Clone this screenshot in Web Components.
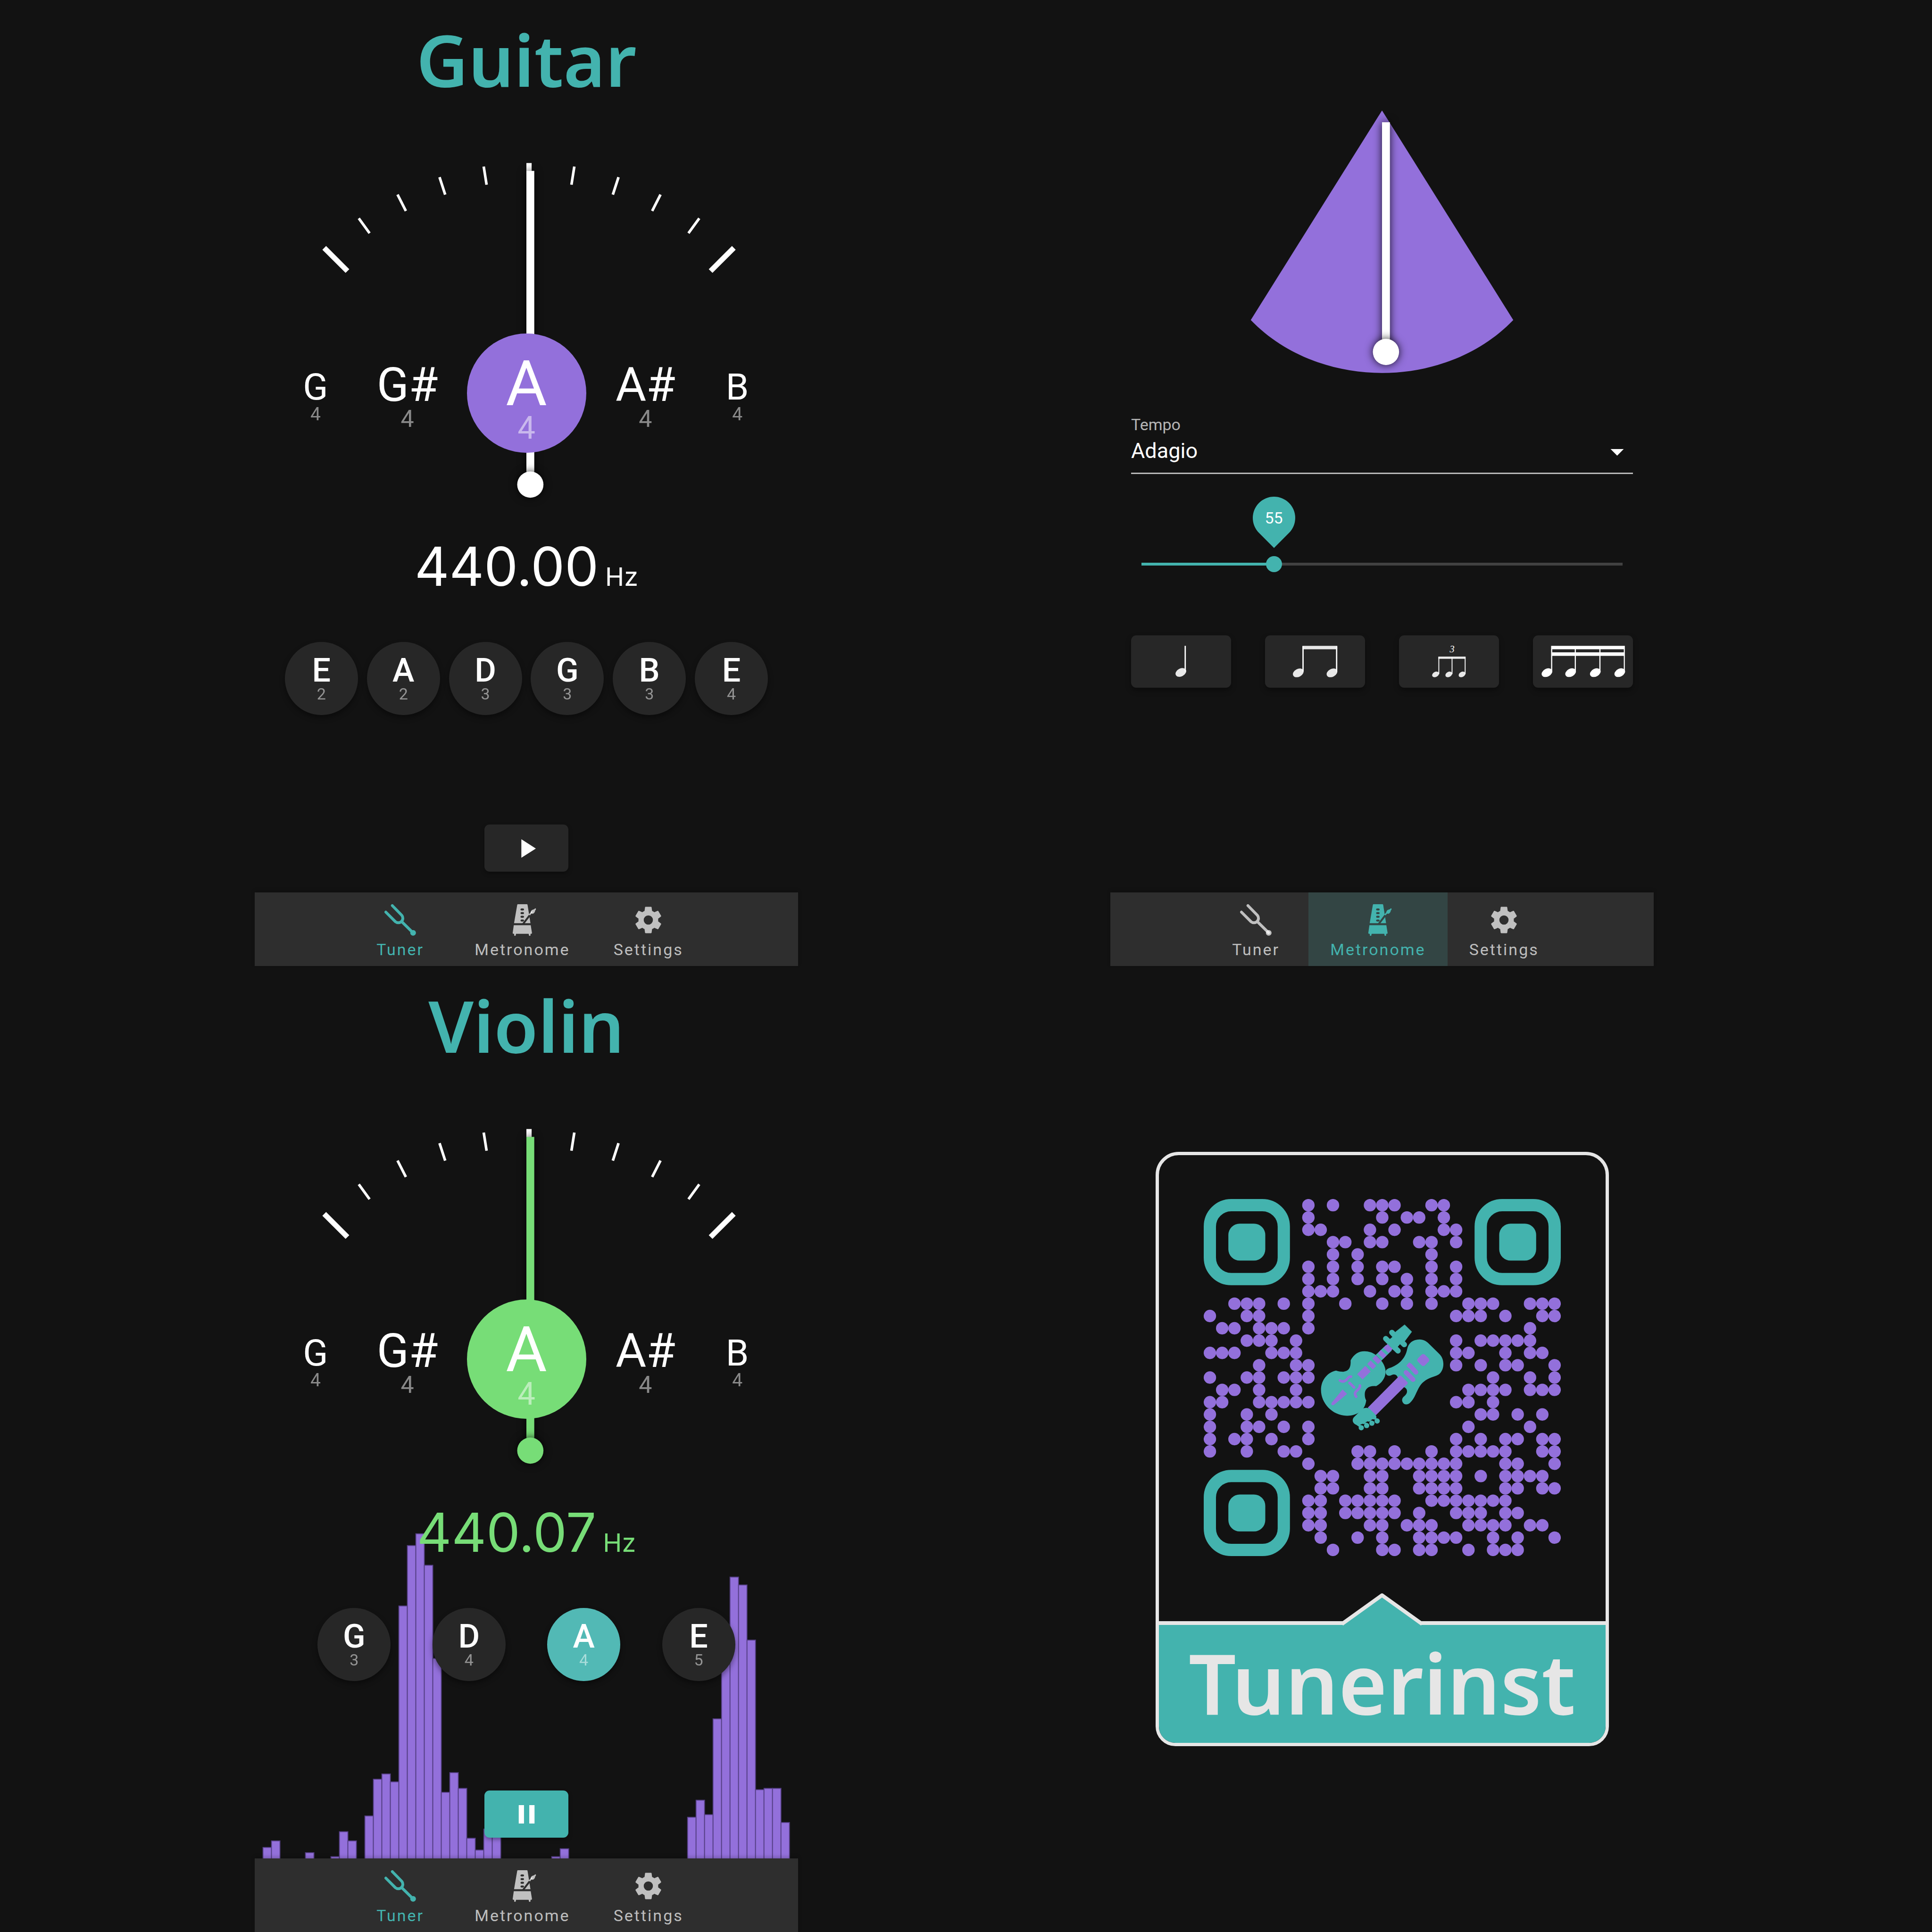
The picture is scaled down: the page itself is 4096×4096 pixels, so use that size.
<!DOCTYPE html>
<html lang="en">
<head>
<meta charset="utf-8">
<meta name="viewport" content="width=device-width, initial-scale=1">
<title>Tunerinst</title>
<style>
  html, body { margin: 0; background: #121212; }
</style>
</head>
<body>
<tuner-showcase>
  <tuner-screen instrument="Guitar" hz="440.00" strings="E2 A2 D3 G3 B3 E4"></tuner-screen>
  <metronome-screen></metronome-screen>
  <tuner-screen instrument="Violin" hz="440.07" strings="G3 D4 A4 E5" playing="A4"></tuner-screen>
  <share-screen></share-screen>
</tuner-showcase>

<script>
const define = (name, render) => customElements.define(name, class extends HTMLElement {
  connectedCallback() {
    if (this.shadowRoot) return;
    const t = document.createElement('template');
    t.innerHTML = render(this);
    this.attachShadow({ mode: 'open' }).append(t.content.cloneNode(true));
  }
});

/* Page: two columns of screens, one screen per row half */
define('tuner-showcase', () => `
<style>
  :host {
    --bg: #121212; --surface: #272727; --bar: #2e2e2e;
    --teal: #43b3ae; --purple: #9370db; --green: #77dd77;
    --muted: rgba(255,255,255,.7);
    display: grid;
    grid-template-columns: 540fr 1152fr 662fr 1152fr 590fr;
    grid-auto-rows: minmax(50vh, auto);
    background: var(--bg); color: #fff;
    font-family: Roboto, "Liberation Sans", sans-serif;
  }
  ::slotted(:nth-child(odd)) { grid-column: 2; }
  ::slotted(:nth-child(even)) { grid-column: 4; }
</style><slot></slot>`);

define('tuner-screen', el => {
  const playing = el.getAttribute('playing');
  return `
<style>
  :host { display: flex; flex-direction: column; position: relative; isolation: isolate; min-width: 0; }
  h1 { margin: 46px 0 0; font: 600 152px/160px "Noto Sans", sans-serif; color: var(--teal); text-align: center; }
  note-gauge { margin-top: 109px; }
  pitch-readout { margin-top: 75px; }
  string-picker { margin-top: 78px; }
  transport-button { margin: auto auto 44px; }
  spectrum-bars { position: absolute; left: 0; right: 0; bottom: 156px; z-index: -1; }
</style>
${playing ? '<spectrum-bars></spectrum-bars>' : ''}
<h1>${el.getAttribute('instrument')}</h1>
<note-gauge ${playing ? 'intune' : ''}></note-gauge>
<pitch-readout ${playing ? 'intune' : ''}>${el.getAttribute('hz')}</pitch-readout>
<string-picker strings="${el.getAttribute('strings')}" active="${playing || ''}"></string-picker>
<transport-button ${playing ? 'playing' : ''}></transport-button>
<bottom-nav current="Tuner"></bottom-nav>`;
});

define('note-gauge', el => {
  const tick = (deg, len, w) =>
    `<line x1="627" x2="627" y1="33" y2="${33 + len}" stroke="#fff" stroke-width="${w}" transform="rotate(${deg} 627 695)"/>`;
  const ticks = [-36, -27, -18, -9, 9, 18, 27, 36].map(d => tick(d, 42, 6)).join('')
    + [-45, 0, 45].map(d => tick(d, 75, 12)).join('');
  const notes = [['G', 'far'], ['G#', 'near'], ['A', 'current'], ['A#', 'near'], ['B', 'far']];
  return `
<style>
  :host { display: grid; --tone: var(--purple); --needle: #fff; }
  :host([intune]) { --tone: var(--green); --needle: var(--green); }
  svg, .notes { grid-area: 1 / 1; }
  svg { display: block; width: 100%; overflow: visible; }
  .needle { fill: var(--needle); filter: drop-shadow(0 0 9px rgba(0,0,0,.8)); }
  .notes {
    display: grid; align-self: start; margin-top: 392px;
    grid-template-columns: 60fr 138fr 252fr 253px 252fr 138fr 60fr;
  }
  .note { display: flex; flex-direction: column; align-items: center; justify-content: center;
          box-sizing: border-box; height: 253px; padding-top: 19px; }
  .note:first-child { grid-column: 2; }
  b { font-weight: 400; line-height: .9; }
  small { font-size: .5em; line-height: 1.1; opacity: .5; }
  .far { font-size: 78px; }
  .near { font-size: 100px; }
  .current { font-size: 134px; padding-top: 28px; border-radius: 50%; background: var(--tone); }
  .current small { line-height: 1; }
</style>
<svg viewBox="0 0 1242 810" aria-hidden="true">
  ${ticks}
  <rect class="needle" x="621" y="51" width="18" height="717"/>
  <circle class="needle" cx="630" cy="768" r="30"/>
</svg>
<div class="notes">${notes.map(([n, c]) => `<div class="note ${c}"><b>${n}</b><small>4</small></div>`).join('')}</div>`;
});

define('pitch-readout', () => `
<style>
  :host { display: flex; justify-content: center; align-items: baseline; gap: 14px;
          font: 400 114px/120px Inter, sans-serif; }
  :host([intune]) { color: var(--green); }
  small { font-size: 54px; }
</style><span><slot></slot></span><small>Hz</small>`);

define('string-picker', el => `
<style>
  :host { display: flex; justify-content: space-evenly; padding: 0 45px; }
  button {
    display: flex; flex-direction: column; align-items: center; justify-content: center;
    box-sizing: border-box; width: 155px; height: 155px; padding: 0; border: 0; border-radius: 50%;
    background: var(--surface); color: #fff; font: 500 70px/64px Roboto, sans-serif;
    box-shadow: 0 6px 12px rgba(0,0,0,.4);
  }
  button[aria-pressed=true] { background: #52b9b5; }
  small { font-size: 34px; font-weight: 400; line-height: 36px; opacity: .5; }
</style>
${el.getAttribute('strings').split(' ').map(s =>
  `<button type="button" aria-pressed="${s === el.getAttribute('active')}">${s[0]}<small>${s[1]}</small></button>`).join('')}`);

define('transport-button', el => {
  const on = el.hasAttribute('playing');
  return `
<style>
  :host { display: block; }
  button { display: grid; place-items: center; width: 178px; height: 100px; padding: 0; border: 0;
           border-radius: 11px; background: var(--surface); box-shadow: 0 4px 8px rgba(0,0,0,.35); }
  :host([playing]) button { background: var(--teal); }
  svg { width: 67px; fill: #fff; }
</style>
<button type="button" aria-label="${on ? 'Pause' : 'Play'}"><svg viewBox="0 0 24 24">
<path d="${on ? 'M14 19h4V5h-4M6 19h4V5H6v14z' : 'M8 5.14v14l11-7-11-7z'}"/></svg></button>`;
});

/* Bar heights by slot, 64 slots across the screen */
const SPECTRUM = { 1: 25, 2: 40, 6: 13, 9: 4, 10: 61, 11: 40, 13: 97, 14: 181, 15: 193, 16: 175, 17: 577,
  18: 715, 19: 742, 20: 670, 21: 457, 22: 151, 23: 196, 24: 160, 25: 46, 26: 19, 27: 67, 28: 58, 35: 4, 36: 22,
  51: 94, 52: 133, 53: 100, 54: 319, 55: 472, 56: 643, 57: 625, 58: 499, 59: 157, 60: 160, 61: 160, 62: 82 };

define('spectrum-bars', () => `
<style>
  :host { display: block; }
  svg { display: block; width: 100%; }
  rect { fill: var(--purple); stroke: #553f85; stroke-width: 2; }
</style>
<svg viewBox="0 0 1242 760" aria-hidden="true">${Object.entries(SPECTRUM).map(([i, h]) =>
  `<rect x="${(i * 19.41 - .5).toFixed(2)}" y="${760 - h}" width="19.4" height="${h + 4}"/>`).join('')}</svg>`);

const ICONS = {
  Tuner: `<svg viewBox="0 0 72 72"><path d="M18 3.2 39.5 25.3A10.3 10.3 0 0 1 25.2 40L3.2 18M39.6 39.8 65 65"
    fill="none" stroke="currentColor" stroke-width="6.4" stroke-linecap="round"/><circle cx="65.3" cy="65.3" r="6.5" fill="currentColor"/></svg>`,
  Metronome: `<svg viewBox="-6 0 72 72" fill="currentColor"><mask id="m"><path fill="#fff" d="M-6 0h72v72h-72z"/>
    <g fill="#000"><rect x="25.7" y="9.7" width="8" height="4.6" rx="2.3"/><rect x="25.7" y="18" width="8" height="4.6" rx="2.3"/>
    <rect x="25.7" y="26.4" width="8" height="4.6" rx="2.3"/><rect x="25.7" y="34.8" width="8" height="4.6" rx="2.3"/></g>
    <path d="M31.5 45 46.5 25.5" stroke="#000" stroke-width="4.4"/></mask>
    <path mask="url(#m)" d="M20 0h20q1.600 0 1.800 1.600L48.400 43.200H11L18.200 1.600Q18.500 0 20 0z"/>
    <path d="M10.400 47.800h38.600l2.800 17.500q.3 2-1.700 2h-1.600v3a1.700 1.700 0 0 1-3.600 0l-.6-3H15.500l-.6 3a1.700 1.700 0 0 1-3.600 0v-3H9.600q-2 0-1.700-2z"/>
    <path d="M46 24.500 52 17" fill="none" stroke="currentColor" stroke-width="3.200"/>
    <path d="M49.500 20.500c-2-2.500 1-8 5.500-8.500l2.600-1c1.400-2.200 2.600-2 3.200-.8.5 1.300-.4 2.700-1.800 4.200-.4 5.500-5.500 9.300-9.500 6.100z"/></svg>`,
  Settings: `<svg viewBox="0 0 24 24"><path fill="currentColor" d="M12,15.5A3.5,3.5 0 0,1 8.500,12A3.5,3.5 0 0,1 12,8.5A3.5,3.5 0 0,1 15.500,12A3.5,3.5 0 0,1 12,15.5M19.43,12.97C19.47,12.65 19.5,12.33 19.5,12C19.5,11.67 19.47,11.34 19.43,11L21.54,9.37C21.73,9.22 21.78,8.95 21.66,8.73L19.66,5.27C19.54,5.05 19.27,4.96 19.05,5.05L16.56,6.05C16.04,5.66 15.5,5.32 14.87,5.07L14.5,2.42C14.46,2.18 14.25,2 14,2H10C9.75,2 9.54,2.18 9.5,2.42L9.13,5.07C8.5,5.32 7.96,5.66 7.44,6.05L4.95,5.05C4.73,4.96 4.46,5.05 4.34,5.27L2.34,8.73C2.21,8.95 2.27,9.22 2.46,9.37L4.57,11C4.53,11.34 4.5,11.67 4.5,12C4.5,12.33 4.53,12.65 4.57,12.97L2.46,14.63C2.27,14.78 2.21,15.05 2.34,15.27L4.34,18.73C4.46,18.95 4.73,19.03 4.95,18.95L7.44,17.94C7.96,18.34 8.5,18.68 9.13,18.93L9.5,21.58C9.54,21.82 9.75,22 10,22H14C14.25,22 14.46,21.82 14.5,21.58L14.87,18.93C15.5,18.67 16.04,18.34 16.56,17.94L19.05,18.95C19.27,19.03 19.54,18.95 19.66,18.73L21.66,15.27C21.78,15.05 21.73,14.78 21.54,14.63L19.43,12.97Z"/></svg>`
};

define('bottom-nav', el => `
<style>
  :host { display: block; }
  nav { display: flex; justify-content: center; height: 156px; background: var(--bar);
        box-shadow: 0 -3px 8px rgba(0,0,0,.2); }
  a { display: flex; flex-direction: column; align-items: center; gap: 9px; box-sizing: border-box;
      min-width: 223px; padding: 25px 46px 0; color: var(--muted); text-decoration: none;
      font-size: 34px; line-height: 40px; letter-spacing: 3px; }
  a[aria-current] { color: var(--teal); }
  :host([focused]) a[aria-current] { background: #334544; }
  svg { width: 67px; height: 67px; }
</style>
<nav>${Object.keys(ICONS).map(n =>
  `<a href="#${n.toLowerCase()}" ${n === el.getAttribute('current') ? 'aria-current="page"' : ''}>${ICONS[n]}<span>${n}</span></a>`).join('')}</nav>`);

define('metronome-screen', () => `
<style>
  :host { display: flex; flex-direction: column; min-width: 0; }
  metronome-pendulum { margin-top: 223px; }
  .controls { display: flex; flex-direction: column; padding: 0 44px; margin-top: 82px; }
  tempo-slider { margin: 174px 5px 134px; }
  bottom-nav { margin-top: auto; }
</style>
<metronome-pendulum></metronome-pendulum>
<div class="controls">
  <tempo-field></tempo-field>
  <tempo-slider></tempo-slider>
  <beat-picker></beat-picker>
</div>
<bottom-nav current="Metronome" focused></bottom-nav>`);

define('metronome-pendulum', () => `
<style>
  :host { display: block; }
  svg { display: block; width: 100%; }
  .fan { fill: var(--purple); }
  .arm { fill: #fff; filter: drop-shadow(0 0 10px rgba(0,0,0,.85)); }
</style>
<svg viewBox="0 0 1242 620" aria-hidden="true">
  <path class="fan" d="M621 12 921 491C843 572 731 612 621 612S399 572 321 491Z"/>
  <rect class="arm" x="621" y="39" width="18" height="525"/>
  <circle class="arm" cx="630" cy="564" r="30"/>
</svg>`);

define('tempo-field', () => `
<style>
  :host { display: grid; }
  label { color: var(--muted); font-size: 34px; line-height: 40px; }
  select, svg { grid-area: 2 / 1; }
  select { appearance: none; box-sizing: border-box; width: 100%; height: 85px; margin: 0; padding: 0 67px 10px 0;
           border: 0; border-bottom: 3px solid var(--muted); border-radius: 0; background: none; color: #fff;
           font: 400 45px/56px Roboto, sans-serif; }
  svg { justify-self: end; width: 67px; margin-top: 4px; fill: #fff; pointer-events: none; }
</style>
<label for="tempo">Tempo</label>
<select id="tempo"><option>Adagio</option></select>
<svg viewBox="0 0 24 24" aria-hidden="true"><path d="M7 10l5 5 5-5z"/></svg>`);

define('tempo-slider', () => `
<style>
  :host { display: grid; align-items: center; }
  .track, input { grid-area: 1 / 1; }
  .track { position: relative; height: 6px; margin: 0 17px; --at: 27.5%;
           background: linear-gradient(90deg, var(--teal) var(--at), #414141 var(--at)); }
  input { appearance: none; width: 100%; height: 34px; margin: 0; background: none; position: relative; }
  input::-webkit-slider-thumb { appearance: none; width: 34px; height: 34px; border-radius: 50%; background: var(--teal); }
  output { position: absolute; left: var(--at); bottom: 56px; width: 90px; height: 90px; margin-left: -45px;
           font-size: 34px; line-height: 90px; text-align: center; }
  output::before { content: ""; position: absolute; inset: 0; z-index: -1; background: var(--teal);
           border-radius: 50% 50% 0 50%; transform: rotate(45deg); }
  .track { isolation: isolate; }
</style>
<div class="track"><output for="bpm">55</output></div>
<input id="bpm" type="range" min="0" max="200" value="55" aria-label="Beats per minute">`);

const head = (x, y, s = 1) => `<ellipse cx="${x}" cy="${y}" rx="${13 * s}" ry="${9 * s}" transform="rotate(-28 ${x} ${y})"/>`;
const BEATS = [
  ['Quarter', `<g fill="#e8e8e8">${head(113.5, 85)}</g><path d="M122 24h3v59h-3z"/>`],
  ['Eighths', `<g fill="#e8e8e8">${head(75.5, 86)}${head(152.8, 86)}<path d="M85 24h80v8H85z"/></g><path d="M85 25h3v58h-3zM162 25h3v58h-3z"/>`],
  ['Triplet', `<g fill="#e8e8e8">${head(83.2, 89.5, .64)}${head(113.5, 89.5, .64)}${head(143.9, 89.5, .64)}<path d="M89.500 48.700h62.500v5H89.500z"/></g>
    <path d="M89.700 50h2v39h-2zM120 50h2v39h-2zM150 50h2v39h-2z"/><text x="121" y="38.500" font-size="22" text-anchor="middle" font-style="italic" font-family="Liberation Serif, serif">3</text>`],
  ['Sixteenths', `${head(31.5, 85.5)}${head(85.7, 85.5)}${head(142.3, 85.5)}${head(198.4, 85.5)}<path d="M41 24h169v8H41zM41 39h169v8H41zM41 24h2.600v60H41zM95.200 24h2.600v60h-2.600zM151.600 24h2.600v60h-2.600zM207.600 24h2.400v60h-2.400z"/>`]
];

define('beat-picker', () => `
<style>
  :host { display: flex; justify-content: space-between; }
  button { width: 212px; height: 111px; padding: 0; border: 0; border-radius: 11px; background: var(--surface);
           box-shadow: 0 6px 12px rgba(0,0,0,.35); }
  svg { display: block; width: 100%; height: 100%; fill: #fff; }
</style>
${BEATS.map(([n, d]) => `<button type="button" aria-label="${n}"><svg viewBox="0 0 228 120">${d}</svg></button>`).join('')}`);

/* Columns of the dark modules, one entry per QR row */
const QR = ['8 10 13 14 15 18 19', '8 14 16 17 19', '8 9 13 15 19 20', '10 11 13 14 17 18 20', '10 12 18',
  '8 10 12 14 15 18 20', '8 10 12 14 16 18 20', '8 9 10 13 15 16 18 19 20', '2 3 4 6 8 11 14 16 18 21 22 23 26 27 28',
  '0 3 4 8 20 21 22 24 27 28', '1 2 4 5 6 8 26', '3 4 5 7 20 22 23 24 25 26', '0 1 2 5 6 7 20 21 24 26 27',
  '4 7 8 20 22 24 25 28', '0 3 4 6 7 8 23 26 28', '1 2 4 7 21 22 23 24 26 27 28', '0 1 4 5 6 7 8 20 21 23',
  '0 3 5 22 23 25 27', '0 3 4 6 8 21 26', '0 2 3 5 8 20 22 24 25 27 28', '0 3 6 7 12 13 15 18 20 21 22 23 24 27 28',
  '8 12 13 14 15 16 17 18 19 20 24 25 28', '9 10 13 14 17 18 19 20 22 24 25 26 27', '9 10 13 14 17 18 19 20 24 25 27 28',
  '8 9 11 12 13 14 15 18 19 20 21 22 23 24', '8 9 11 12 13 14 15 17 20 21 22 24 25', '8 9 13 14 16 17 18 21 22 23 24 26 27',
  '9 12 14 17 18 19 20 23 25 28', '10 14 15 17 18 21 23 24 25'];

define('qr-code', () => {
  const m = 28.138;
  const dots = QR.map((r, y) => r.split(' ').map(x =>
    `<circle cx="${((+x + .5) * m).toFixed(1)}" cy="${((y + .5) * m).toFixed(1)}" r="14.2"/>`).join('')).join('');
  const eye = (x, y) => `<g transform="translate(${x} ${y})"><rect x="14" y="14" width="169" height="169" rx="49" fill="none" stroke="var(--teal)" stroke-width="28"/>
    <rect x="56.300" y="56.300" width="84.400" height="84.400" rx="26" fill="var(--teal)"/></g>`;
  return `
<style>:host { display: block; } svg { display: block; width: 100%; }</style>
<svg viewBox="0 0 816 816" role="img" aria-label="QR code">
  <g fill="var(--purple)">${dots}</g>
  ${eye(0, 0)}${eye(619, 0)}${eye(0, 619)}
  <g transform="translate(229 260) scale(.33333)" fill="var(--teal)" stroke-linecap="round">
    <path d="M320 326C345 282 375 264 415 264 445 264 470 273 492 289L531 329C551 355 560 382 560 405 560 445 532 484 495 503 442 498 417 522 417 560 417 578 421 592 427 601 422 642 404 670 370 688 342 702 316 706 292 706 195 704 117 620 117 530 117 455 168 406 220 396 240 402 254 404 270 404 308 400 323 375 320 326Z"/>
    <path d="M492 289 562 222 603 258 531 328Z"/>
    <path d="M691 83 739 130 690 196 660 212 640 235 612 254 568 205 588 183 612 162 628 132Z" stroke="var(--teal)" stroke-width="3"/>
    <path d="M603 135 632 166M561 177 598 214M688 218 655 186M645 261 612 228" fill="none" stroke="var(--teal)" stroke-width="37"/>
    <path d="M612 162 590 183 601 196 624 175ZM660 212 640 235 628 226 650 200Z"/>
    <g fill="var(--purple)">
      <path d="M420 364 458 402 402 457 365 421ZM457 327 495 365 472 388 434 351ZM492 290 531 328 508 352 470 315ZM527 254 567 292 545 315 507 278ZM573 214 608 248 580 276 543 241Z"/>
      <path d="M265 526 296 556 205 632Q195 636 189 630 186 622 191 616Z"/>
    </g>
    <path d="M247 464C270 480 289 465 298 452 306 441 315 436 323 438M384 499C386 517 371 527 362 535 346 549 347 561 358 575M313 481 343 511" fill="none" stroke="var(--purple)" stroke-width="18"/>
    <path d="M855 210 932 286C962 318 961 370 945 398 932 424 910 432 888 438 850 450 815 470 795 502 770 540 762 585 726 619 710 632 690 632 680 618 668 600 672 585 688 572 708 555 711 538 702 522Q696 512 686 510L642 441C635 422 615 419 600 428 580 437 562 430 560 407 560 390 575 383 590 378 645 358 695 318 708 248 717 208 745 184 792 183 820 183 840 196 855 210Z"/>
    <path d="M667 433 709 475Q715 481 709 488L493 703 438 650 654 433Q660 427 667 433Z" fill="var(--purple)"/>
    <rect x="784" y="290" width="68" height="68" rx="17" fill="var(--purple)" transform="rotate(45 818 324)"/>
    <path d="M728 362 768 408M700 409 748 458" fill="none" stroke="var(--purple)" stroke-width="32"/>
    <path d="M723 340 702 362 722 382 748 362Z" fill="var(--purple)"/>
    <path d="M400 660C415 650 436 650 449 657L488 696Q499 706 496 721L508 732 482 732 470 745 447 745 433 760 411 762 398 778 378 782 360 769C332 760 328 732 343 716Z"/>
    <circle cx="502" cy="742" r="18"/><circle cx="466" cy="757" r="18"/><circle cx="430" cy="773" r="18"/><circle cx="393" cy="788" r="18"/>
    <path d="M385 768 402 761 412 765 405 774ZM421 752 437 744 447 749 440 757ZM457 737 473 729 483 733 477 742Z" fill="var(--bg)"/>
  </g>
</svg>`;
});

define('share-screen', () => `
<style>
  :host { display: flex; flex-direction: column; justify-content: center; align-items: center; --line: #e6e6e6; }
  .card { display: flex; flex-direction: column; box-sizing: border-box; width: 961px; max-width: 100%;
          border: 7px solid var(--line); border-radius: 49px 49px 42px 42px; }
  qr-code { width: 757px; margin: 93px auto 138px; }
  .banner { position: relative; border-top: 8px solid var(--line); background: var(--teal);
            border-radius: 0 0 35px 35px; color: var(--line);
            font: 600 177px/180px "Noto Sans", sans-serif; text-align: center; padding: 32px 0 38px; }
  svg { position: absolute; left: 50%; bottom: 100%; width: 170px; margin: 0 0 -1px -85px; overflow: visible; }
</style>
<div class="card">
  <qr-code></qr-code>
  <div class="banner">
    <svg viewBox="0 0 170 68" aria-hidden="true"><path d="M0 69 85 4 170 69Z" fill="var(--teal)"/>
    <path d="M0 65 85 4 170 65" fill="none" stroke="var(--line)" stroke-width="8" stroke-linejoin="round"/></svg>
    Tunerinst
  </div>
</div>`);
</script>
</body>
</html>
